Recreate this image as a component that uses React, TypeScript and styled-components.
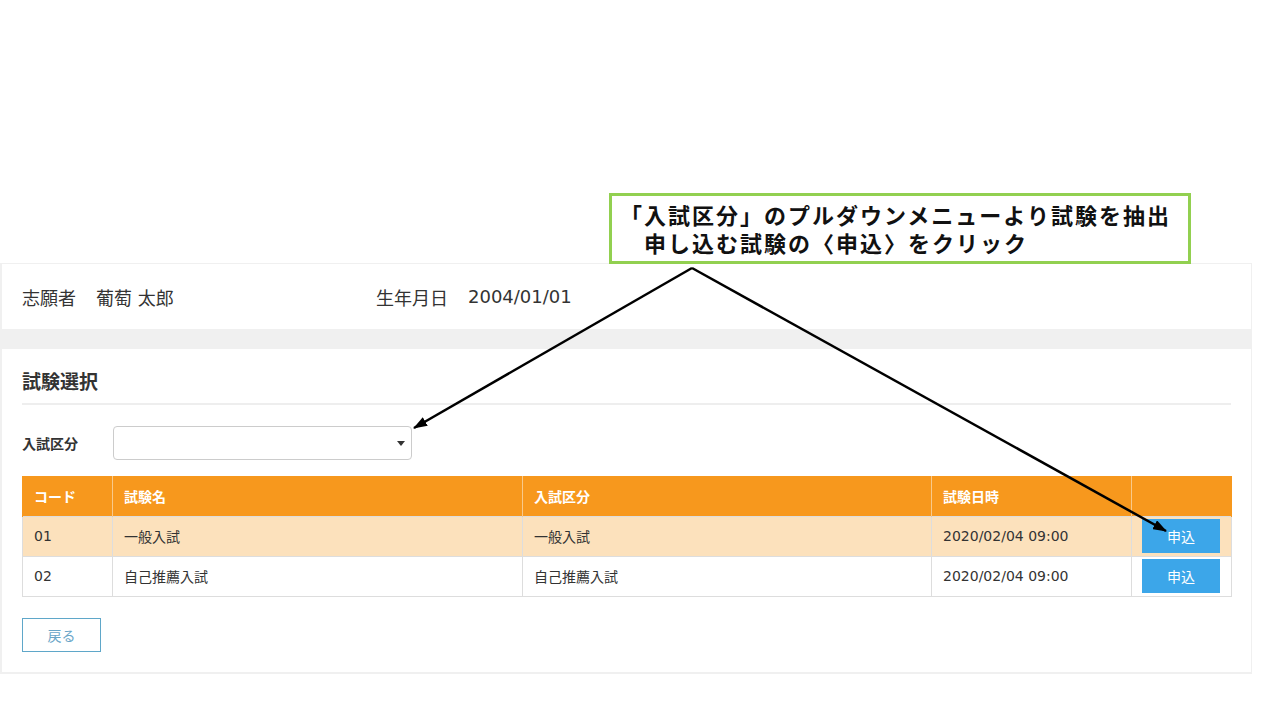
import React from "react";
import styled, { createGlobalStyle } from "styled-components";

const GlobalStyle = createGlobalStyle`
  html, body {
    margin: 0;
    padding: 0;
    background: #ffffff;
  }
  body {
    font-family: "DejaVu Sans", "Noto Sans CJK JP", sans-serif;
    color: #333333;
  }
  * { box-sizing: border-box; }
`;

const Page = styled.div`
  position: relative;
  width: 1280px;
  height: 720px;
  padding-top: 263px;
  overflow: hidden;
`;

const Frame = styled.div`
  width: 1252px;
  background: #f0f0f0;
  padding: 1px 1px 2px 2px;
  display: flex;
  flex-direction: column;
  gap: 20px;
`;

const InfoPanel = styled.div`
  height: 65px;
  background: #ffffff;
  display: flex;
  align-items: center;
  padding: 0 20px;
  font-size: 18px;
  color: #333333;
`;

const InfoItem = styled.div<{ $width?: number }>`
  display: flex;
  align-items: center;
  width: ${(p) => (p.$width ? `${p.$width}px` : "auto")};
`;

const InfoLabel = styled.span`
  margin-right: 20px;
`;

const Panel = styled.div`
  background: #ffffff;
  padding: 20px;
`;

const Title = styled.h2`
  margin: 0;
  font-size: 19px;
  font-weight: bold;
  line-height: 26px;
  color: #333333;
  padding-bottom: 8px;
  border-bottom: 2px solid #eeeeee;
`;

const FilterRow = styled.div`
  margin-top: 21px;
  display: flex;
  align-items: center;
`;

const FilterLabel = styled.label`
  width: 91px;
  font-size: 14px;
  font-weight: bold;
  color: #333333;
`;

const SelectBox = styled.div`
  position: relative;
  width: 299px;
  height: 34px;
  border: 1px solid #cccccc;
  border-radius: 4px;
  background: #ffffff;
  &::after {
    content: "";
    position: absolute;
    right: 6px;
    top: 14px;
    border-left: 4px solid transparent;
    border-right: 4px solid transparent;
    border-top: 5px solid #333333;
  }
`;

const Table = styled.table`
  margin-top: 16px;
  width: 1209px;
  border-collapse: collapse;
  table-layout: fixed;
  font-size: 14px;
`;

const HeadCell = styled.th`
  height: 40px;
  padding: 0 0 0 11px;
  background: #f7981d;
  color: #ffffff;
  font-weight: bold;
  text-align: left;
  border-left: 1px solid #f9c98a;
  border-right: 1px solid #f9c98a;
  &:first-child { border-left-color: #f7981d; }
  &:last-child { border-right-color: #f7981d; }
`;

const Row = styled.tr<{ $highlight?: boolean }>`
  background: ${(p) => (p.$highlight ? "#fce1bc" : "#ffffff")};
`;

const Cell = styled.td`
  height: 40px;
  padding: 0 0 0 11px;
  border: 1px solid #dddddd;
  color: #333333;
  text-align: left;
`;

const ActionCell = styled.td`
  height: 40px;
  padding: 0 0 0 10px;
  border: 1px solid #dddddd;
`;

const ApplyButton = styled.button`
  display: block;
  width: 78px;
  height: 34px;
  border: none;
  background: #3ca6e9;
  color: #ffffff;
  font-family: inherit;
  font-size: 14px;
  padding: 0;
  cursor: pointer;
`;

const BackButton = styled.button`
  margin-top: 21px;
  display: block;
  width: 79px;
  height: 34px;
  border: 1px solid #5fa7c9;
  background: #ffffff;
  color: #6aa6c8;
  font-family: inherit;
  font-size: 14px;
  padding: 0;
  cursor: pointer;
`;

const Callout = styled.div`
  position: absolute;
  left: 609px;
  top: 193px;
  width: 582px;
  height: 71px;
  border: 3px solid #92d050;
  background: #ffffff;
  padding: 4px 0 0 8px;
  font-family: "Noto Sans CJK JP", sans-serif;
  font-size: 22px;
  font-weight: bold;
  letter-spacing: 2px;
  line-height: 28px;
  color: #111111;
  white-space: pre;
`;

const Overlay = styled.svg`
  position: absolute;
  left: 0;
  top: 0;
  width: 1280px;
  height: 720px;
  pointer-events: none;
`;

const rows = [
  { code: "01", name: "一般入試", kind: "一般入試", date: "2020/02/04 09:00" },
  { code: "02", name: "自己推薦入試", kind: "自己推薦入試", date: "2020/02/04 09:00" },
];

export default function App() {
  return (
    <Page>
      <GlobalStyle />
      <Frame>
        <InfoPanel>
          <InfoItem $width={354}>
            <InfoLabel>志願者</InfoLabel>
            <span>葡萄 太郎</span>
          </InfoItem>
          <InfoItem>
            <InfoLabel>生年月日</InfoLabel>
            <span>2004/01/01</span>
          </InfoItem>
        </InfoPanel>
        <Panel>
          <Title>試験選択</Title>
          <FilterRow>
            <FilterLabel>入試区分</FilterLabel>
            <SelectBox />
          </FilterRow>
          <Table>
            <colgroup>
              <col style={{ width: 90 }} />
              <col style={{ width: 410 }} />
              <col style={{ width: 409 }} />
              <col style={{ width: 200 }} />
              <col style={{ width: 100 }} />
            </colgroup>
            <thead>
              <tr>
                <HeadCell>コード</HeadCell>
                <HeadCell>試験名</HeadCell>
                <HeadCell>入試区分</HeadCell>
                <HeadCell>試験日時</HeadCell>
                <HeadCell />
              </tr>
            </thead>
            <tbody>
              {rows.map((r, i) => (
                <Row key={r.code} $highlight={i === 0}>
                  <Cell>{r.code}</Cell>
                  <Cell>{r.name}</Cell>
                  <Cell>{r.kind}</Cell>
                  <Cell>{r.date}</Cell>
                  <ActionCell>
                    <ApplyButton>申込</ApplyButton>
                  </ActionCell>
                </Row>
              ))}
            </tbody>
          </Table>
          <BackButton>戻る</BackButton>
        </Panel>
      </Frame>
      <Callout>{"「入試区分」のプルダウンメニューより試験を抽出\n　申し込む試験の〈申込〉をクリック"}</Callout>
      <Overlay viewBox="0 0 1280 720">
        <defs>
          <marker id="ah" markerWidth="10" markerHeight="8" refX="9" refY="4" orient="auto" markerUnits="userSpaceOnUse">
            <path d="M0,0 L10,4 L0,8 Z" fill="#000" />
          </marker>
          <marker id="ah2" markerWidth="14" markerHeight="10" refX="13" refY="5" orient="auto" markerUnits="userSpaceOnUse">
            <path d="M0,0 L14,5 L0,10 Z" fill="#000" />
          </marker>
        </defs>
        <line x1="692" y1="268" x2="414" y2="428" stroke="#000" strokeWidth="2.5" markerEnd="url(#ah2)" />
        <line x1="692" y1="268" x2="1166" y2="531" stroke="#000" strokeWidth="2.5" markerEnd="url(#ah2)" />
      </Overlay>
    </Page>
  );
}
